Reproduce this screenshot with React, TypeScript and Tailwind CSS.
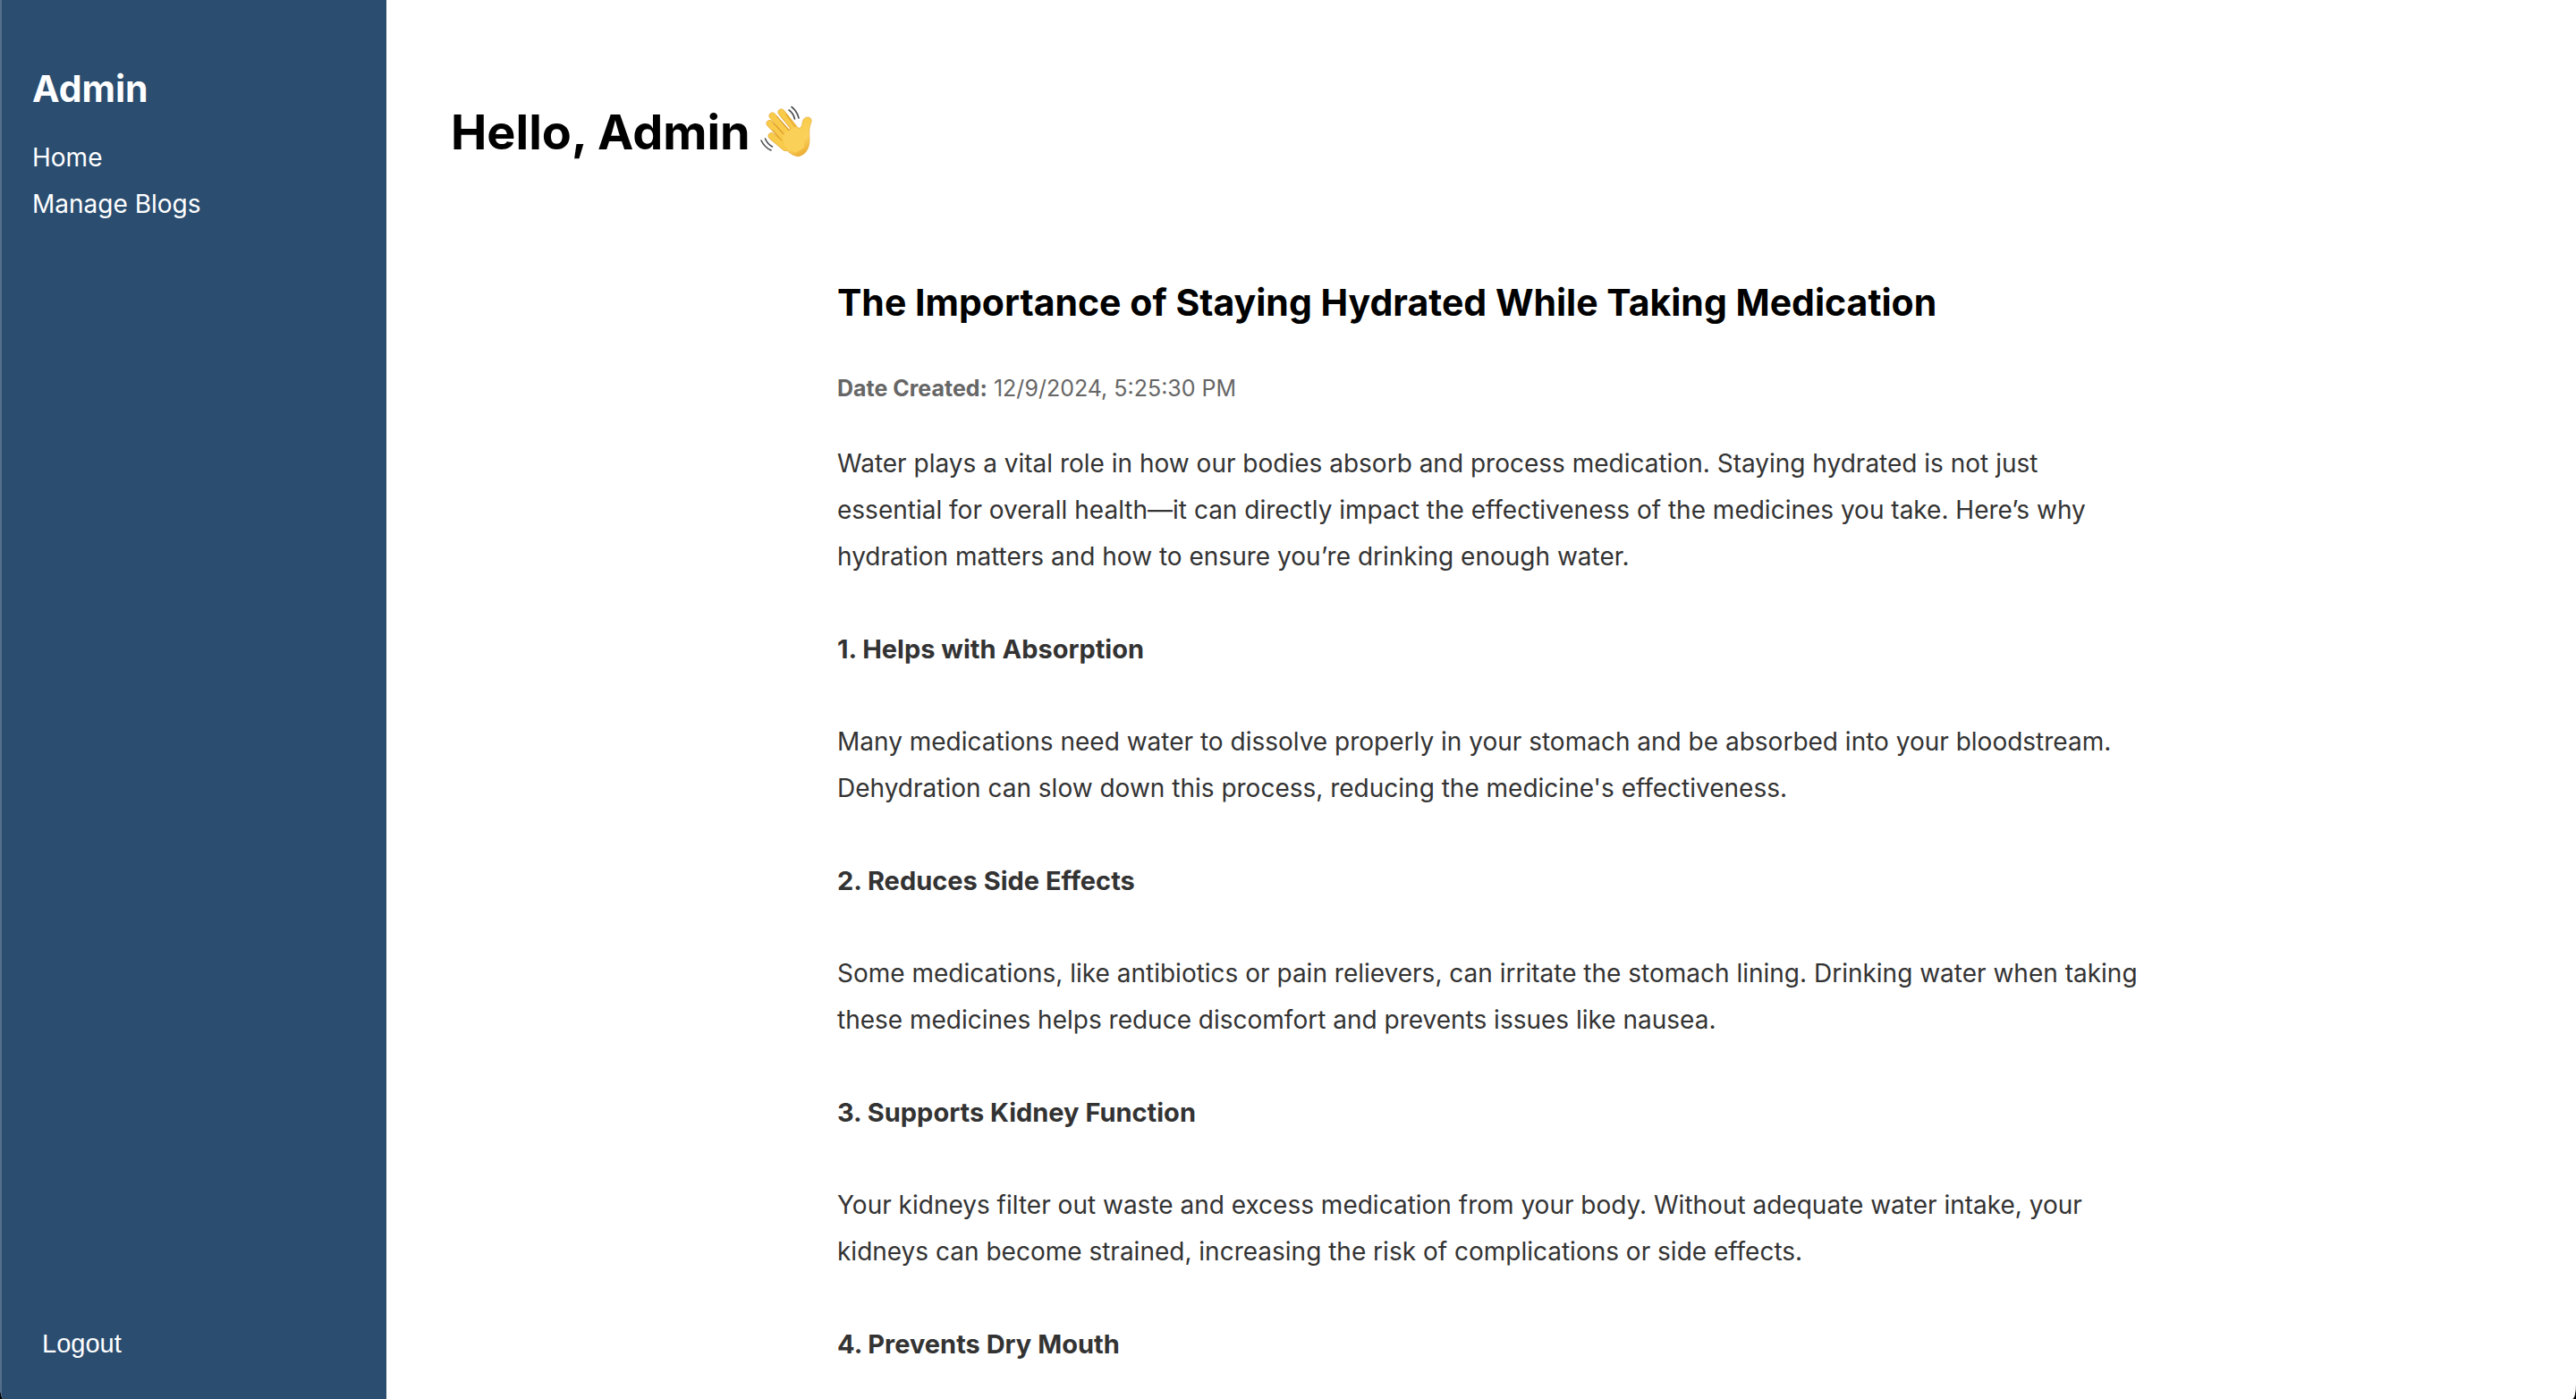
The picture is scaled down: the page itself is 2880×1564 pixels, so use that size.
import type { ReactNode } from "react";

type Section = { title: string; lines: string[] };

const intro = [
  "Water plays a vital role in how our bodies absorb and process medication. Staying hydrated is not just",
  "essential for overall health—it can directly impact the effectiveness of the medicines you take. Here’s why",
  "hydration matters and how to ensure you’re drinking enough water.",
];

const sections: Section[] = [
  {
    title: "1. Helps with Absorption",
    lines: [
      "Many medications need water to dissolve properly in your stomach and be absorbed into your bloodstream.",
      "Dehydration can slow down this process, reducing the medicine's effectiveness.",
    ],
  },
  {
    title: "2. Reduces Side Effects",
    lines: [
      "Some medications, like antibiotics or pain relievers, can irritate the stomach lining. Drinking water when taking",
      "these medicines helps reduce discomfort and prevents issues like nausea.",
    ],
  },
  {
    title: "3. Supports Kidney Function",
    lines: [
      "Your kidneys filter out waste and excess medication from your body. Without adequate water intake, your",
      "kidneys can become strained, increasing the risk of complications or side effects.",
    ],
  },
  { title: "4. Prevents Dry Mouth", lines: [] },
];

function Lines({ lines }: { lines: string[] }) {
  return (
    <p>
      {lines.map((line) => (
        <span key={line} className="block whitespace-nowrap">
          {line}
        </span>
      ))}
    </p>
  );
}

function WavingHand() {
  return (
    <svg viewBox="0 3 80 80" className="size-20 shrink-0" role="img" aria-label="Waving hand">
      <defs>
        <linearGradient id="skin" x1="0.2" y1="0" x2="0.7" y2="1">
          <stop offset="0" stopColor="#f8c944" />
          <stop offset="0.65" stopColor="#fbd25c" />
          <stop offset="1" stopColor="#e9a92c" />
        </linearGradient>
      </defs>
      <g fill="none" stroke="#e2a22c" strokeLinecap="round" strokeWidth="7.6">
        <path d="M24.5 24.5 45 47M34.5 20.5 52 42M21.5 33 41 53M23.5 47 39 60" />
      </g>
      <path
        d="M36 58C44 68 51 70.5 55 69.5C63 67 66 59 66 52C66 44 65 38 68 31.5C69 28.5 67 26 64 26C60 26 58.5 29 58 33C57.5 37 55.5 39 52.5 38L40 40Z"
        fill="url(#skin)"
        stroke="#e2a22c"
        strokeWidth="0.6"
      />
      <g fill="none" stroke="#f9cb4b" strokeLinecap="round" strokeWidth="6.6">
        <path d="M24.5 24.5 45 48M34.5 20.5 53 43M21.5 33 41 54M23.5 47 39 60" />
      </g>
      <path d="M36 46 50 36 60 44 60 60 50 66 38 58Z" fill="#fbd058" />
      <g fill="none" stroke="#d9962a" strokeWidth="1" strokeLinecap="round">
        <path d="M29.5 25 43 41M25.500 32.5 37 45M25 40.5 35 52M40 23 50 37" />
      </g>
      <g fill="none" stroke="#4a4d50" strokeWidth="1.6" strokeLinecap="round">
        <path d="M46 14.5Q52 19 54 27M43 18Q48 21.5 49.5 28M12 52Q16 60 23 63M16.5 50Q19 56 24.5 59" />
      </g>
    </svg>
  );
}

function NavLink({ children }: { children: ReactNode }) {
  return (
    <a href="#" className="block">
      {children}
    </a>
  );
}

export default function App() {
  return (
    <div className="h-screen overflow-hidden bg-black font-[Inter,sans-serif]">
      <div className="flex h-full overflow-hidden bg-white [border-radius:0_0_4px_4px/0_0_16px_16px]">
        <aside className="flex w-[15%] shrink-0 flex-col justify-between border-l-2 border-[#546f8c] bg-[#2a4d70] px-[34px] pt-[72px] pb-9 text-white">
          <div>
            <h2 className="text-[41px] leading-[54px] font-bold">Admin</h2>
            <nav className="mt-6 text-[28px] leading-[52px]">
              <NavLink>Home</NavLink>
              <NavLink>Manage Blogs</NavLink>
            </nav>
          </div>
          <button
            type="button"
            className="self-start px-[11px] py-2 text-left font-['Liberation_Sans',Arial,sans-serif] text-[29px] leading-[36px]"
          >
            Logout
          </button>
        </aside>
        <main className="min-w-0 flex-1 overflow-hidden px-[72px] pt-[108px]">
          <h1 className="flex items-center text-[54px] leading-[80px] font-bold text-black">
            Hello, Admin <WavingHand />
          </h1>
          <article className="mx-auto mt-[120px] max-w-[1440px] text-[28px] leading-[52px] text-[#333]">
            <h2 className="text-[41px] leading-[60px] font-bold text-black">
              The Importance of Staying Hydrated While Taking Medication
            </h2>
            <p className="mt-[46px] text-[25px] leading-[40px] text-[#666]">
              <strong>Date Created:</strong> 12/9/2024, 5:25:30 PM
            </p>
            <div className="mt-[38px] flex flex-col gap-[52px]">
              <Lines lines={intro} />
              {sections.map((s) => (
                <section key={s.title} className="flex flex-col gap-[51px]">
                  <h3 className="text-[29px] font-bold">{s.title}</h3>
                  {s.lines.length > 0 && <Lines lines={s.lines} />}
                </section>
              ))}
            </div>
          </article>
        </main>
      </div>
    </div>
  );
}
